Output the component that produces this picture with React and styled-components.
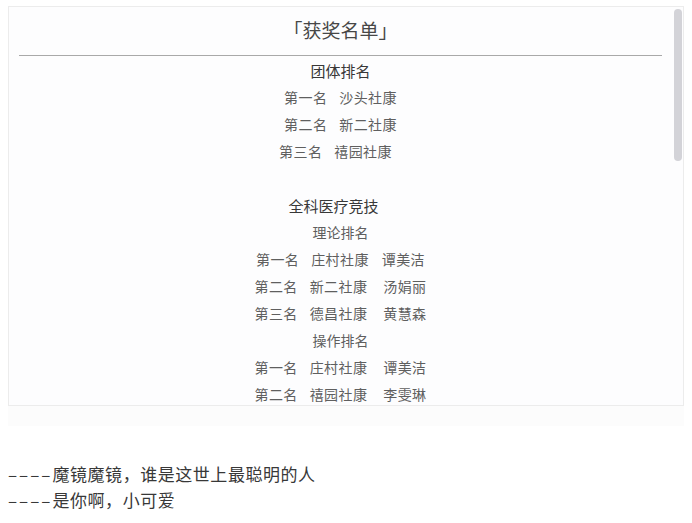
import React from 'react';
import styled, { createGlobalStyle } from 'styled-components';

const GlobalStyle = createGlobalStyle`
  body {
    margin: 0;
    background: #fff;
    font-family: "Noto Sans CJK SC", "Noto Sans", sans-serif;
  }
`;

const teamRanks = [
  { rank: '第一名', unit: '沙头社康' },
  { rank: '第二名', unit: '新二社康' },
  { rank: '第三名', unit: '禧园社康', shift: 10 },
];

const theoryRanks = [
  { rank: '第一名', unit: '庄村社康', person: '谭美洁', gap: 13 },
  { rank: '第二名', unit: '新二社康', person: '汤娟丽', gap: 16 },
  { rank: '第三名', unit: '德昌社康', person: '黄慧森', gap: 16 },
];

const practiceRanks = [
  { rank: '第一名', unit: '庄村社康', person: '谭美洁', gap: 16 },
  { rank: '第二名', unit: '禧园社康', person: '李雯琳', gap: 16 },
];

function RankRow({ rank, unit, person, gap = 13, shift = 0 }) {
  return (
    <Row $shift={shift}>
      <span>{rank}</span>
      <Unit>{unit}</Unit>
      {person && <Person $gap={gap}>{person}</Person>}
    </Row>
  );
}

export default function App() {
  return (
    <>
      <GlobalStyle />
      <Page>
        <ScrollBox>
          <Inner>
            <Title>「获奖名单」</Title>
            <Divider />

            <Heading>团体排名</Heading>
            {teamRanks.map((r) => (
              <RankRow key={r.rank} {...r} />
            ))}

            <Spacer />

            <Heading $shift={14}>全科医疗竞技</Heading>
            <SubHeading>理论排名</SubHeading>
            {theoryRanks.map((r) => (
              <RankRow key={r.rank} {...r} />
            ))}
            <SubHeading>操作排名</SubHeading>
            {practiceRanks.map((r) => (
              <RankRow key={r.rank} {...r} />
            ))}
          </Inner>
          <Thumb />
        </ScrollBox>
        <Band />

        <Quote>
          <p>
            <Dash>––––</Dash>魔镜魔镜，谁是这世上最聪明的人
          </p>
          <p>
            <Dash>––––</Dash>是你啊，小可爱
          </p>
        </Quote>
      </Page>
    </>
  );
}

const Page = styled.div`
  padding: 6px 8px 0;
`;

const ScrollBox = styled.section`
  position: relative;
  box-sizing: border-box;
  height: 400px;
  border: 1px solid #ececec;
  background: #fdfdfe;
  overflow: hidden;
`;

const Thumb = styled.div`
  position: absolute;
  top: 2px;
  right: 1px;
  width: 8px;
  height: 152px;
  border-radius: 4px;
  background: #d3d3d8;
`;

const Inner = styled.div`
  padding: 0 21px 0 10px;
`;

const Title = styled.h2`
  margin: 0;
  padding-top: 9px;
  text-align: center;
  font-size: 19px;
  font-weight: 400;
  line-height: 28px;
  color: #474747;
`;

const Divider = styled.div`
  height: 1px;
  margin: 11px 0 1px;
  background: #a9a9a9;
`;

const Heading = styled.h3`
  margin: 0;
  padding-right: ${(p) => p.$shift || 0}px;
  text-align: center;
  font-size: 15px;
  font-weight: 400;
  line-height: 27px;
  color: #383838;
`;

const SubHeading = styled.div`
  text-align: center;
  font-size: 14px;
  line-height: 27px;
  color: #5f5f5f;
`;

const Row = styled.div`
  display: flex;
  justify-content: center;
  padding-right: ${(p) => p.$shift}px;
  font-size: 14px;
  line-height: 27px;
  letter-spacing: 0.4px;
  color: #5f5f5f;
`;

const Unit = styled.span`
  margin-left: 12px;
`;

const Person = styled.span`
  margin-left: ${(p) => p.$gap}px;
`;

const Spacer = styled.div`
  height: 27px;
`;

const Band = styled.div`
  height: 20px;
  background: #fcfcfc;
`;

const Quote = styled.div`
  margin-top: 35px;
  font-size: 17px;
  letter-spacing: 0.544px;
  line-height: 26px;
  color: #383838;

  p {
    margin: 0;
  }
`;

const Dash = styled.span`
  letter-spacing: 2px;
`;
